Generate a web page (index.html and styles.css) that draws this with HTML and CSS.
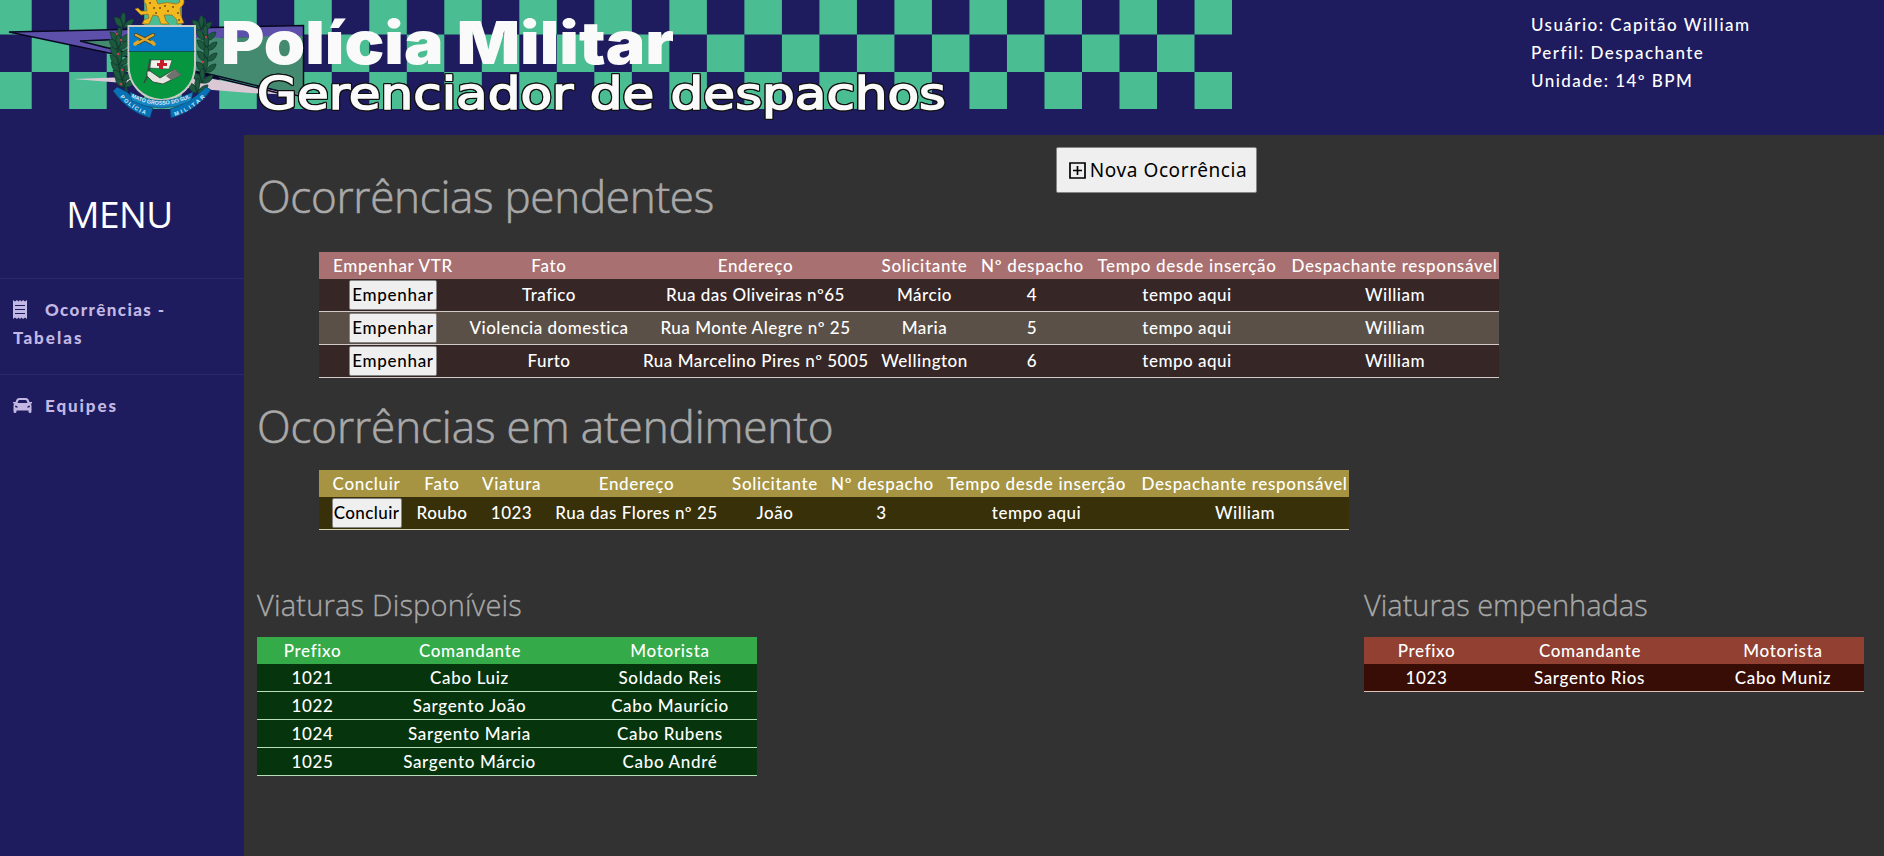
FILE: index.html
```html
<!DOCTYPE html>
<html lang="pt-BR">
<head>
<meta charset="utf-8">
<title>Gerenciador de despachos</title>
<link rel="stylesheet" href="styles.css">
</head>
<body>
<header class="topbar">
  <svg class="banner" width="1232" height="135" viewBox="0 0 1232 135">
    <defs>
      <pattern id="checker" x="-5.810" y="-3" width="75.02" height="75" patternUnits="userSpaceOnUse">
        <rect x="0" y="0" width="37.51" height="37.5" fill="#4bbd93"/>
        <rect x="37.510" y="37.5" width="37.51" height="37.5" fill="#4bbd93"/>
      </pattern>
    </defs>
    <rect width="1232" height="109" fill="url(#checker)"/>
    <path d="M9 32 303 25.500V36L80 41 130 55V57Z" fill="#5c50ab"/>
    <path d="M80 41 303 36V96L213 75 128 53Z" fill="#438a70"/>
    <path d="M73 79 128 77 213 79 300 95 250 93 213 90Z" fill="#dac8d4"/>
    <path d="M303.500 97V25.500L9 32 128 57 213 75 303.500 97M128 39 80 41 128 53 213 77 278 93" fill="none" stroke="#080820" stroke-width="1.500"/>
    <!-- laurel branches -->
    <g fill="none" stroke="#174b3c" stroke-width="2.500">
      <path d="M124 18C117 40 117 65 127 92M204 18C211 42 208 68 195 91"/>
    </g>
    <g fill="#1d5a3d" stroke="#0f352f" stroke-width=".7">
      <path id="leafA" d="M123 27C115 27 115 20 114 17 121 17 123 22 123 27 126 21 130 19 134 19 133 25 129 28 123 27Q118 15 124 12 128 18 123 27Z"/>
      <use href="#leafA" x="-4" y="15"/><use href="#leafA" x="-4" y="30"/><use href="#leafA" x="-3" y="45"/><use href="#leafA" x="1" y="60"/>
      <use href="#leafA" x="-5" y="22"/><use href="#leafA" x="-4" y="38"/><use href="#leafA" x="-1" y="53"/>
      <use href="#leafA" x="78" y="3"/><use href="#leafA" x="82" y="13"/><use href="#leafA" x="83" y="23"/><use href="#leafA" x="83" y="34"/><use href="#leafA" x="82" y="45"/><use href="#leafA" x="79" y="56"/><use href="#leafA" x="74" y="66"/>
    </g>
    <g fill="#c33b45"><circle cx="117" cy="34" r="1.300"/><circle cx="121" cy="40" r="1.300"/><circle cx="118" cy="54" r="1.300"/><circle cx="122" cy="70" r="1.300"/><circle cx="121" cy="84" r="1.300"/><circle cx="206" cy="37" r="1.200"/><circle cx="203" cy="62" r="1.200"/></g>
    <!-- jaguar -->
    <path d="M135 9 138 8 141 11 147 11 146 4 144 2 145-3H155L158 4Q168 1 176 4L180 2 178-4H182Q187 3 180 8L181 16 184 23 177 24 177 20 172 15 164 15 166 21 169 24H161L158 16 153 15 149 24H142L144 20 149 18 148 14 141 15Z" fill="#f2b91f" stroke="#8d6720" stroke-width=".7"/>
    <g fill="#74511b"><circle cx="150" cy="3" r="1"/><circle cx="154" cy="8" r="1"/><circle cx="160" cy="8" r="1"/><circle cx="165" cy="6" r="1"/><circle cx="168" cy="11" r="1"/><circle cx="173" cy="7" r="1"/><circle cx="178" cy="13" r="1"/><circle cx="156" cy="13" r="1"/><circle cx="179" cy="20" r="1"/></g>
    <!-- shield -->
    <path d="M128.500 26H195V65C195 86 180 99 161.500 100 143 99 128.500 86 128.500 65Z" fill="#069640" stroke="#c9ccc6" stroke-width="2"/>
    <path d="M129.500 27H194V51.300H129.500Z" fill="#087bc9"/>
    <path d="M129 51.500H194.500" stroke="#11544e"/>
    <g fill="none" stroke-linecap="round">
      <path d="M136 35 152 43M153 35 138 43" stroke="#54451f" stroke-width="4"/>
      <path d="M136 35 152 43M153 35 138 43" stroke="#dca92d" stroke-width="2.400"/>
      <path d="M152 42 154 44M138 42 135 44" stroke="#dca92d" stroke-width="3.500"/>
    </g>
    <path d="M151 60 172 60 169 69 150 68Z" fill="#f4f1ec" stroke="#303934" stroke-width=".5"/>
    <path d="M160 60H164V63H167V66H163V69H159V66H157V63H160Z" fill="#c51e2a"/>
    <path d="M150 59 147 77 144 83M150 68 148 73" fill="none" stroke="#34483d" stroke-width="1.500"/>
    <path d="M147 71 150 71 160 78 175 69 181 75 163 84 153 82 147 76Z" fill="#e5e5df" stroke="#283b31" stroke-width=".8"/>
    <path d="M166 76 175 69 181 75 171 80Z" fill="#70726d"/>
    <!-- motto ribbons -->
    <path d="M117 87 127 92Q138 104 153 108L150 118Q128 112 113 91ZM206 87 211 90Q195 112 171 118L170 109Q189 104 206 87Z" fill="#0872b7" stroke="#123b69" stroke-width=".7"/>
    <path d="M130 92Q160 109 193 92L191 101Q161 115 132 101Z" fill="#1686c4" stroke="#11496c" stroke-width=".6"/>
    <path id="mottoMid" d="M131 97Q161 113 194 96" fill="none"/>
    <path id="mottoLeft" d="M120 97Q132 111 150 116" fill="none"/>
    <path id="mottoRight" d="M175 116Q194 110 207 95" fill="none"/>
    <g class="motto">
      <text><textPath href="#mottoMid" textLength="62" lengthAdjust="spacingAndGlyphs">MATO GROSSO DO SUL</textPath></text>
      <text><textPath href="#mottoLeft" textLength="31">POLÍCIA</textPath></text>
      <text><textPath href="#mottoRight" textLength="36">MILITAR</textPath></text>
    </g>
    <text class="brand" x="221" y="64" textLength="453" lengthAdjust="spacingAndGlyphs">Polícia Militar</text>
    <text class="product" x="257" y="109" textLength="689" lengthAdjust="spacingAndGlyphs">Gerenciador de despachos</text>
  </svg>
  <div class="user">
    <div class="u1">Usuário: Capitão William</div>
    <div class="u2">Perfil: Despachante</div>
    <div class="u3">Unidade: 14º BPM</div>
  </div>
</header>
<div class="shell">
  <nav class="sidebar">
    <h3 class="menu-title">MENU</h3>
    <a class="item"><svg class="ico" width="14" height="19" viewBox="0 0 14 19"><path d="M0 0 2 1.500 4 0 5.500 1.500 7 0 8.500 1.500 10 0 12 1.500 14 0V19L12 17.500 10 19 8.500 17.500 7 19 5.500 17.500 4 19 2 17.500 0 19Z" fill="#c3b8e3"/><path d="M2 5.500H12M2 9.500H12M2 13.500H12" stroke="#1e1b5e" stroke-width="1.200"/></svg><span class="item-a">Ocorrências -</span><br><span class="item-b">Tabelas</span></a>
    <a class="item"><svg class="ico car" width="19" height="15" viewBox="0 0 19 15"><path fill-rule="evenodd" d="M0 4H2.500L3.500 1.500Q4.200 0 6 0H13Q14.800 0 15.500 1.500L16.500 4H19V5.500H17.500Q18.500 6.300 18.500 8V13.500Q18.500 15 17 15 15.500 15 15.500 13.500V12.500H3.500V13.500Q3.500 15 2 15 .5 15 .5 13.500V8Q.5 6.300 1.500 5.500H0ZM4.500 5H14.500L13.500 2.600Q13.200 2 12.500 2H6.500Q5.800 2 5.500 2.600ZM2.200 7.500V9Q3.500 10 5 9.300 4.300 7.500 2.200 7.500ZM16.800 7.500Q14.700 7.500 14 9.300 15.500 10 16.800 9Z" fill="#c3b8e3"/></svg><span class="item-c">Equipes</span></a>
  </nav>
  <main class="main">
    <section class="pending">
      <div class="title-row">
        <h1 class="title t1">Ocorrências pendentes</h1>
        <button class="new-btn"><svg width="17" height="17" viewBox="0 0 17 17"><path d="M1 1H16V16H1ZM8.500 4V13M4 8.500H13" fill="none" stroke="#000" stroke-width="1.700"/></svg><span>Nova Ocorrência</span></button>
      </div>
      <table class="grid rose">
        <colgroup><col class="w136"><col class="w175"><col class="w238"><col class="w100"><col class="w115"><col class="w195"><col class="w221"></colgroup>
        <thead><tr><th>Empenhar VTR</th><th>Fato</th><th>Endereço</th><th>Solicitante</th><th>Nº despacho</th><th>Tempo desde inserção</th><th>Despachante responsável</th></tr></thead>
        <tbody>
          <tr><td><button class="act">Empenhar</button></td><td>Trafico</td><td>Rua das Oliveiras nº65</td><td>Márcio</td><td>4</td><td>tempo aqui</td><td>William</td></tr>
          <tr><td><button class="act">Empenhar</button></td><td>Violencia domestica</td><td>Rua Monte Alegre nº 25</td><td>Maria</td><td>5</td><td>tempo aqui</td><td>William</td></tr>
          <tr><td><button class="act">Empenhar</button></td><td>Furto</td><td>Rua Marcelino Pires nº 5005</td><td>Wellington</td><td>6</td><td>tempo aqui</td><td>William</td></tr>
        </tbody>
      </table>
    </section>
    <section class="active">
      <h1 class="title t2">Ocorrências em atendimento</h1>
      <table class="grid gold">
        <colgroup><col class="w83"><col class="w67"><col class="w72"><col class="w178"><col class="w99"><col class="w114"><col class="w196"><col class="w221"></colgroup>
        <thead><tr><th>Concluir</th><th>Fato</th><th>Viatura</th><th>Endereço</th><th>Solicitante</th><th>Nº despacho</th><th>Tempo desde inserção</th><th>Despachante responsável</th></tr></thead>
        <tbody><tr><td><button class="act short">Concluir</button></td><td>Roubo</td><td>1023</td><td>Rua das Flores nº 25</td><td>João</td><td>3</td><td>tempo aqui</td><td>William</td></tr></tbody>
      </table>
    </section>
    <div class="vehicles">
      <section>
        <h2 class="subtitle sub-a">Viaturas Disponíveis</h2>
        <table class="grid fleet green">
          <colgroup><col class="w99"><col class="w215"><col class="w186"></colgroup>
          <thead><tr><th>Prefixo</th><th>Comandante</th><th>Motorista</th></tr></thead>
          <tbody>
            <tr><td>1021</td><td>Cabo Luiz</td><td>Soldado Reis</td></tr>
            <tr><td>1022</td><td>Sargento João</td><td>Cabo Maurício</td></tr>
            <tr><td>1024</td><td>Sargento Maria</td><td>Cabo Rubens</td></tr>
            <tr><td>1025</td><td>Sargento Márcio</td><td>Cabo André</td></tr>
          </tbody>
        </table>
      </section>
      <section>
        <h2 class="subtitle">Viaturas empenhadas</h2>
        <table class="grid fleet red">
          <colgroup><col class="w113"><col class="w213"><col class="w174"></colgroup>
          <thead><tr><th>Prefixo</th><th>Comandante</th><th>Motorista</th></tr></thead>
          <tbody><tr><td>1023</td><td>Sargento Rios</td><td>Cabo Muniz</td></tr></tbody>
        </table>
      </section>
    </div>
  </main>
</div>
</body>
</html>
```

FILE: styles.css
```css
* { box-sizing: border-box; }
body { margin: 0; height: 856px; overflow: hidden; background: #323232; color: #fff; font: 500 17px/28px Lato, sans-serif; }
h1, h2, h3 { margin: 0; font-family: "Open Sans", "Noto Sans", sans-serif; font-weight: 300; white-space: nowrap; }
.topbar { height: 135px; background: #1e1b5e; display: flex; justify-content: space-between; }
.banner { display: block; }
.brand { font: 900 59px Inter, sans-serif; fill: #fafafa; }
.product { font: 45px "DejaVu Sans", sans-serif; fill: #fafafa; stroke: #fafafa; stroke-width: 1.6px; filter: drop-shadow(1px 0 0 #111) drop-shadow(-1px 0 0 #111) drop-shadow(0 1px 0 #111) drop-shadow(0 -1px 0 #111); }
.motto { font: 700 5.5px "Liberation Sans", sans-serif; fill: #dceefa; }
.user { width: 353px; padding-top: 11px; letter-spacing: 1.45px; }
.shell { display: flex; height: 721px; }
.sidebar { width: 244px; background: #1e1b5e; }
.menu-title { height: 143px; padding: 52px 5px 0 0; text-align: center; font-size: 37px; line-height: 54px; letter-spacing: -.6px; font-weight: 400; }
.item { display: block; height: 96px; border-top: 1px solid #2b2869; padding: 17px 12px; color: #c3b8e3; font-weight: 900; letter-spacing: 1.4px; }
.item span { margin-left: 18px; }
.item .item-b { margin-left: 1px; letter-spacing: 2px; }
.item .item-c { margin-left: 13px; letter-spacing: 1.9px; }
.ico { vertical-align: -3px; margin-left: 1px; }
.car { vertical-align: -1px; }
.main { flex: 1; padding: 12px 20px 0 13px; }
.pending { height: 252px; }
.title-row { display: flex; height: 105px; }
.title { color: #a9a9a9; font-size: 44px; line-height: 60px; -webkit-text-stroke: .6px #a9a9a9; }
.t1 { width: 799px; padding-top: 19px; letter-spacing: -.28px; }
.new-btn { width: 201px; height: 46px; display: flex; align-items: center; justify-content: center; gap: 4px; padding: 0 0 0 3px; background: #efefef; border: 1px solid #858585; border-radius: 2px; color: #000; font: 19px "Noto Sans", sans-serif; letter-spacing: .6px; }
.grid { border-collapse: separate; border-spacing: 0; table-layout: fixed; margin-left: 62px; letter-spacing: .5px; }
.grid th { height: 27px; padding: 0 0 0 13px; line-height: 27px; font-weight: 500; letter-spacing: .68px; white-space: nowrap; }
.grid th:first-child, .grid th:last-child { padding-left: 12px; }
.grid td { height: 33px; padding: 0 0 0 13px; line-height: 26px; text-align: center; white-space: nowrap; border-bottom: 1px solid #d2cbc8; }
.grid td:first-child { padding-left: 12px; }
.rose { width: 1180px; }
.rose th { background: #a87070; }
.rose td { background: #362626; }
.rose tr:nth-child(2) td { background: #5a5047; }
.gold { width: 1030px; }
.gold th { background: #a69442; }
.gold td { background: #373008; border-color: #d3d2b3; }
.act { display: block; margin: 0 auto; width: 88px; height: 30px; padding: 0; background: #efefef; border: 1px solid #858585; border-radius: 2px; color: #000; font: 500 17px/26px Lato, sans-serif; letter-spacing: .7px; }
.short { width: 70px; letter-spacing: .4px; }
.active { height: 181px; }
.t2 { height: 74px; margin-top: -3px; letter-spacing: -.1px; }
.vehicles { display: flex; justify-content: space-between; }
.subtitle { height: 60px; color: #a9a9a9; font-size: 29px; line-height: 55px; -webkit-text-stroke: .3px #a9a9a9; }
.sub-a { letter-spacing: .2px; }
.fleet { width: 500px; margin: 0; }
.fleet th { padding-left: 13px; }
.fleet td { height: 28px; padding-left: 12px; line-height: 27px; letter-spacing: .65px; }
.green th { background: #35aa48; }
.green td { background: #06350d; border-color: #b9dcbc; }
.red th { background: #914031; }
.red td { background: #370d05; border-color: #dcc2b8; }
.w67 { width: 67px; } .w72 { width: 72px; } .w83 { width: 83px; } .w99 { width: 99px; }
.w100 { width: 100px; } .w113 { width: 113px; } .w114 { width: 114px; } .w115 { width: 115px; }
.w136 { width: 136px; } .w174 { width: 174px; } .w175 { width: 175px; } .w178 { width: 178px; }
.w186 { width: 186px; } .w195 { width: 195px; } .w196 { width: 196px; } .w213 { width: 213px; }
.w215 { width: 215px; } .w221 { width: 221px; } .w238 { width: 238px; }
```
